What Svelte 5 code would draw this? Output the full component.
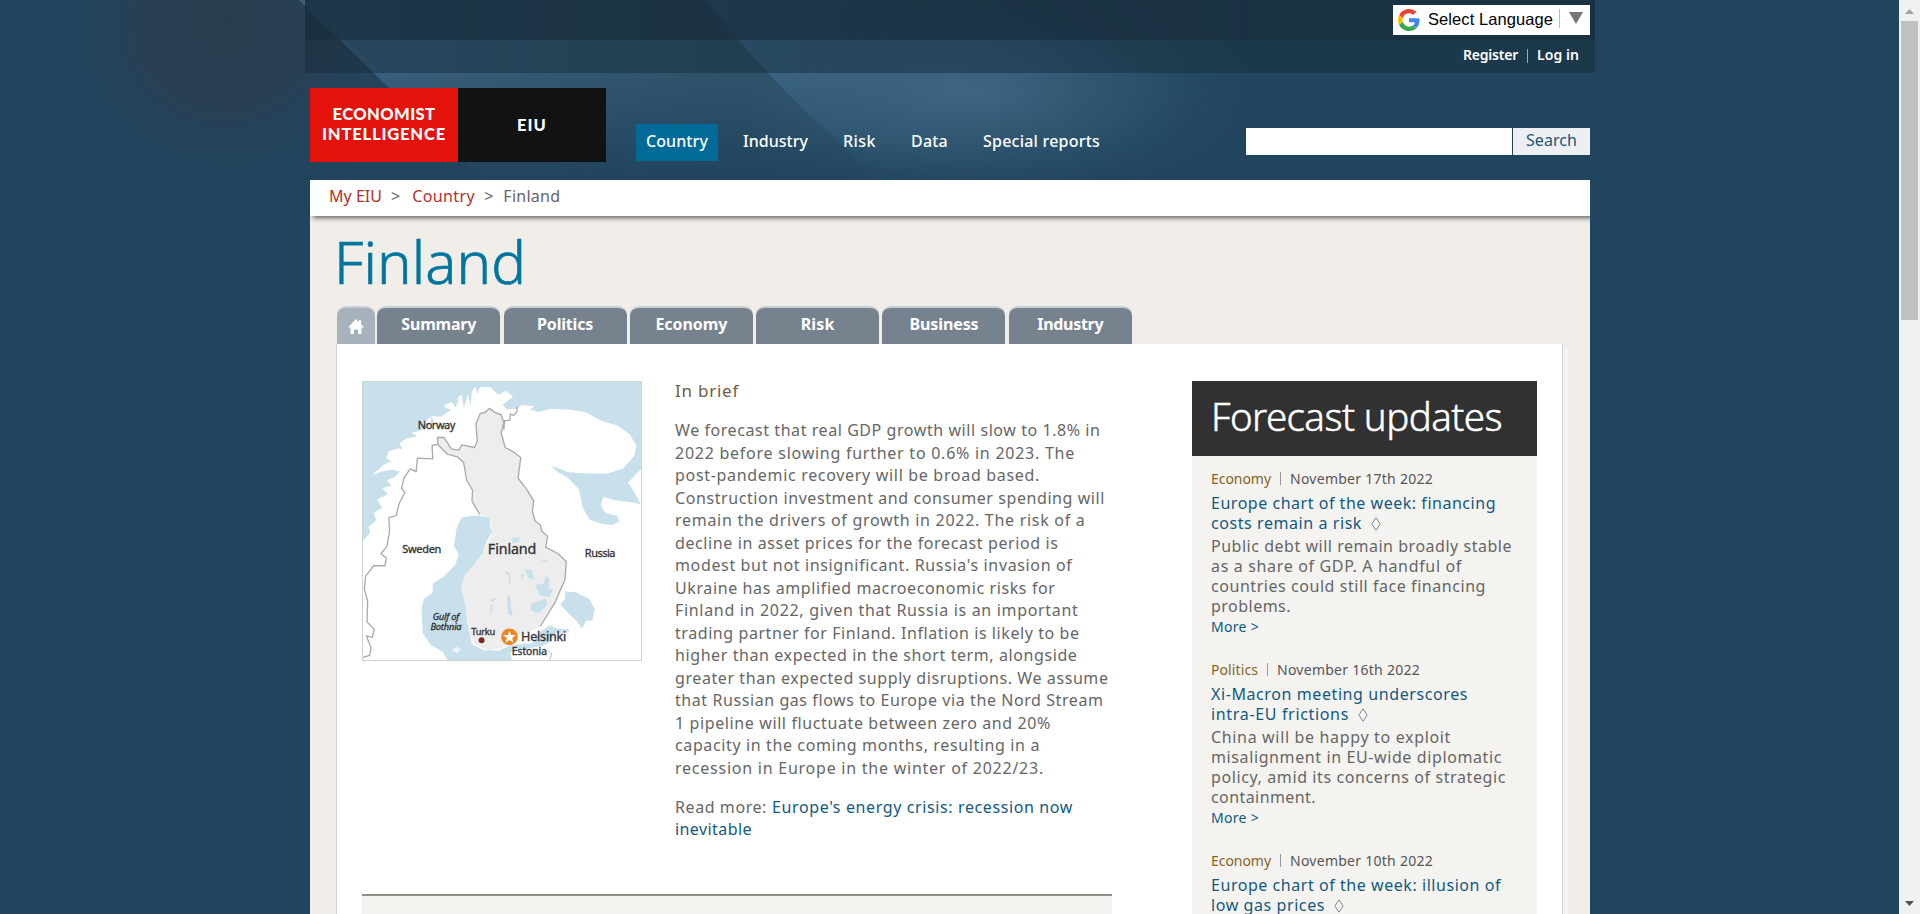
<script>
  // Tunes letter-spacing so that a run of text fills its measure in px.
  function fit(node, width) {
    const range = document.createRange();
    range.selectNodeContents(node);
    const natural = range.getBoundingClientRect().width;
    const n = node.textContent.length;
    if (n > 1) node.style.letterSpacing = (width - natural) / n + 'px';
  }

  const nav = [
    ['Country', 62, true],
    ['Industry', 65],
    ['Risk', 33],
    ['Data', 37],
    ['Special reports', 117]
  ];
  const tabs = [
    ['Summary', 75],
    ['Politics', 56],
    ['Economy', 72],
    ['Risk', 34],
    ['Business', 69],
    ['Industry', 66]
  ];
  const brief = [
    ['We forecast that real GDP growth will slow to 1.8% in', 425.5],
    ['2022 before slowing further to 0.6% in 2023. The', 400],
    ['post-pandemic recovery will be broad based.', 365],
    ['Construction investment and consumer spending will', 430],
    ['remain the drivers of growth in 2022. The risk of a', 410.5],
    ['decline in asset prices for the forecast period is', 383.5],
    ["modest but not insignificant. Russia's invasion of", 397.5],
    ['Ukraine has amplified macroeconomic risks for', 380.5],
    ['Finland in 2022, given that Russia is an important', 403.5],
    ['trading partner for Finland. Inflation is likely to be', 404.5],
    ['higher than expected in the short term, alongside', 402.5],
    ['greater than expected supply disruptions. We assume', 433.5],
    ['that Russian gas flows to Europe via the Nord Stream', 428.5],
    ['1 pipeline will fluctuate between zero and 20%', 376],
    ['capacity in the coming months, resulting in a', 365],
    ['recession in Europe in the winter of 2022/23.', 369]
  ];
  const updates = [
    {
      topic: ['Economy', 60],
      date: ['November 17th 2022', 143],
      title: [['Europe chart of the week: financing', 285], ['costs remain a risk', 151]],
      text: [
        ['Public debt will remain broadly stable', 301],
        ['as a share of GDP. A handful of', 251],
        ['countries could still face financing', 275],
        ['problems.', 80]
      ]
    },
    {
      topic: ['Politics', 47],
      date: ['November 16th 2022', 143],
      title: [['Xi-Macron meeting underscores', 257], ['intra-EU frictions', 138]],
      text: [
        ['China will be happy to exploit', 240],
        ['misalignment in EU-wide diplomatic', 291],
        ['policy, amid its concerns of strategic', 295],
        ['containment.', 105]
      ]
    },
    {
      topic: ['Economy', 60],
      date: ['November 10th 2022', 143],
      title: [['Europe chart of the week: illusion of', 290], ['low gas prices', 114]],
      text: []
    }
  ];
</script>

<div class="page">
  <svg class="backdrop" width="1899" height="230" viewBox="0 0 1899 230" aria-hidden="true">
    <defs>
      <radialGradient id="smoke"><stop offset="0" stop-color="#2a3d4f" /><stop offset=".4" stop-color="#293f53" stop-opacity=".9" /><stop offset="1" stop-color="#21455e" stop-opacity="0" /></radialGradient>
      <radialGradient id="glow"><stop offset="0" stop-color="#456c8a" stop-opacity=".9" /><stop offset=".5" stop-color="#38607f" stop-opacity=".5" /><stop offset="1" stop-color="#21455e" stop-opacity="0" /></radialGradient>
      <linearGradient id="beamA" x1="0" x2="1"><stop offset="0" stop-color="#3c6384" stop-opacity=".95" /><stop offset=".3" stop-color="#355b75" stop-opacity=".85" /><stop offset=".6" stop-color="#315369" stop-opacity=".8" /><stop offset="1" stop-color="#2d5068" stop-opacity="0" /></linearGradient>
      <linearGradient id="beamB" x1="0" x2="1"><stop offset="0" stop-color="#406e92" stop-opacity=".85" /><stop offset=".45" stop-color="#3c6581" stop-opacity=".6" /><stop offset="1" stop-color="#2d5068" stop-opacity="0" /></linearGradient>
      <linearGradient id="fade" x1="0" y1="0" x2="0" y2="1"><stop offset=".34" stop-color="#fff" /><stop offset=".78" stop-color="#000" /></linearGradient>
      <mask id="down"><rect width="1899" height="230" fill="url(#fade)" /></mask>
    </defs>
    <ellipse cx="225" cy="20" rx="210" ry="210" fill="url(#smoke)" />
    <g mask="url(#down)">
      <rect x="305" width="195" height="230" fill="#2c4258" opacity=".35" />
      <path d="M299 0L534 230H1100V0Z" fill="url(#beamA)" />
      <path d="M707 0Q765 78 855 157L925 230H1250V0Z" fill="url(#beamB)" />
    </g>
    <ellipse cx="975" cy="95" rx="310" ry="120" fill="url(#glow)" opacity=".75" />
  </svg>

  <div class="topbar">
    <div class="langrow">
      <div class="lang">
        <svg width="22" height="22" viewBox="0 0 48 48">
          <path fill="#EA4335" d="M24 9.5c3.5 0 6.700 1.200 9.200 3.600l6.900-6.900C35.900 2.400 30.500 0 24 0 14.600 0 6.500 5.400 2.600 13.200l8 6.200C12.400 13.700 17.700 9.500 24 9.500z" />
          <path fill="#4285F4" d="M47 24.600c0-1.600-.2-3.100-.4-4.600H24v9h12.900c-.6 3-2.200 5.500-4.700 7.200l7.700 6C44.400 38 47 31.800 47 24.600z" />
          <path fill="#FBBC05" d="M10.500 28.600c-.5-1.500-.8-3-.8-4.600s.3-3.100.8-4.600l-8-6.200C.9 16.500 0 20.100 0 24s.9 7.500 2.600 10.800z" />
          <path fill="#34A853" d="M24 48c6.500 0 11.900-2.100 15.900-5.800l-7.700-6c-2.200 1.500-4.900 2.300-8.200 2.300-6.300 0-11.600-4.200-13.500-9.900l-8 6.200C6.500 42.600 14.600 48 24 48z" />
        </svg>
        <span class="lt"><span use:fit={125}>Select Language</span></span>
        <i></i>
        <svg class="tri" width="14" height="12" viewBox="0 0 14 12"><path d="M0 0h14L7 12z" fill="#767676" /></svg>
      </div>
    </div>
    <div class="account">
      <a use:fit={55}>Register</a><b></b><a use:fit={42}>Log in</a>
    </div>
  </div>

  <div class="wrap">
    <header>
      <div class="logo">
        <div class="red"><span use:fit={103}>ECONOMIST</span><span use:fit={124}>INTELLIGENCE</span></div>
        <div class="black"><span use:fit={30}>EIU</span></div>
      </div>
      <nav>
        {#each nav as [label, w, on]}
          <a class:on><span use:fit={w}>{label}</span></a>
        {/each}
      </nav>
      <div class="search"><div class="field"></div><button><span use:fit={51}>Search</span></button></div>
    </header>

    <div class="crumbs">
      <a use:fit={53}>My EIU</a><em class="g1">&gt;</em><a use:fit={63}>Country</a><em class="g2">&gt;</em><span use:fit={57}>Finland</span>
    </div>

    <main>
      <h1><span use:fit={192}>Finland</span></h1>
      <div class="tabs">
        <div class="tab home">
          <svg width="16" height="15" viewBox="0 0 16 15"><path d="M8 0l3 3V1h2v4l3 3.500h-2.500V15H10v-4.500H6V15H2.500V8.500H0z" fill="#fff" /></svg>
        </div>
        {#each tabs as [label, w]}
          <div class="tab"><span use:fit={w}>{label}</span></div>
        {/each}
      </div>

      <div class="panel">
        <div class="left">
          <div class="intro">
            <div class="map">
              <svg viewBox="22 24 837 832" width="278" height="278" preserveAspectRatio="none">
                <rect x="22" y="24" width="837" height="832" fill="#fff" />
                <path fill="#c7e0ec" d="M22 24H859V285L820 325L838 352L858 390L830 384L780 378L745 368L738 394L752 416L788 424L794 442L770 452L735 447L705 436L684 402L672 345L640 312L604 290L588 274L640 294L700 298L760 298L806 282L838 246L845 215L826 182L790 155L740 140L690 114L640 106L590 104L550 114L525 106L538 97L500 92L486 104L455 106L442 92L474 68L452 50L430 62L404 38L374 40L366 60L350 50L346 96L338 60L326 102L318 62L300 100L290 84L264 98L288 108L256 128L228 126L236 142L200 168L168 176L186 186L152 194L134 206L140 226L128 222L98 232L92 252L108 262L86 270L48 304L78 292L110 286L132 292L118 308L94 318L108 334L80 342L98 360L64 376L80 400L54 416L62 438L38 458L44 474L22 500Z" />
                <path fill="#fff" d="M268 92l22-8-6 12zM304 76l12-14 6 14zM352 44l9-6 4 16-8 34zM130 212l26-20 8 10-22 16zM95 250l10-22 14 10-8 20zM198 150l30-22-2 18z" />
                <path fill="#c7e0ec" d="M318 430L350 424L375 424L404 430L404 456L412 470L394 502L384 534L356 572L330 600L318 640L330 690L335 735L344 780L350 808L380 824L430 828L466 812L494 808L530 806L556 772L584 752L606 762L645 765L638 774L600 776L590 800L560 815L500 824L466 832L470 856H276L262 832L226 810L202 776L198 700L206 672L232 655L232 628L270 602L300 570L310 540L296 514L304 462Z" />
                <path fill="#c7e0ec" d="M632 650L664 654L702 672L720 704L712 738L694 738L682 762L664 738L644 720L616 690L630 674Z" />
                <path fill="#ededed" d="M403 103L420 114L438 122L446 145L438 176L450 220L476 234L497 250L489 312L514 344L536 380L532 410L540 440L556 452L560 470L578 486L572 518L610 538L634 562L630 616L600 684L556 755L520 774L478 790L436 822L395 827L360 808L346 786L335 735L330 690L318 640L330 600L356 572L390 525L412 470L404 430L373 420L350 380L352 348L334 318L325 265L306 248L276 240L248 212L246 190L266 190L288 224L310 228L320 212L358 220L366 200L362 150L375 118Z" />
                <path fill="none" stroke="#aaa" stroke-width="4" stroke-linejoin="round" d="M373 420L350 380L352 348L334 318L325 265L306 248L276 240L248 212L246 190L266 190L288 224L310 228L320 212L358 220L366 200L362 150L375 118L388 116L403 103L420 116L438 122L446 145L438 176L450 220L476 234L497 250L489 312L514 344L536 380L532 410L540 440L556 452L560 470L578 486L572 518L610 538L634 562L630 616L600 684L556 755M446 168L448 140L464 138L466 120L476 124L486 112L486 98" />
                <path fill="none" stroke="#aaa" stroke-width="4" stroke-linejoin="round" d="M248 210L230 214L232 254L186 252L182 292L164 284L146 310L138 342L148 354L130 390L122 424L100 430L102 470L94 516L76 538L92 550L88 574L54 574L30 605L26 644L36 680L34 742L56 764L50 788L32 784L46 818L42 842L22 848" />
                <path fill="none" stroke="#aaa" stroke-width="2.500" d="M580 828L590 838L584 856" />
                <path fill="#c7e0ec" d="M470 492l24-4-2 14-20 4zM508 584l22 2 8 30-18-6zM540 632l26-6 6-22 12 8-4 30 14 2-10 24-28-6zM528 690l24-12 22-6 2 20-24 24-24-8zM456 664l8 0 8 60-14-6zM448 592h10l8 10-2 26h-4l2-24zM404 676l22-6-14 12zM406 690l6 0-2 30-4-2zM498 600l8-4-4 26zM548 552l30 8-2 6z" />
                <path fill="#fff" d="M380 828l14-8 6 8zM290 826l14-10 12 8-10 12z" opacity=".7" />
                <circle cx="379" cy="797" r="9" fill="#7c2c24" />
                <circle cx="463" cy="787" r="25" fill="#ee8422" />
                <path fill="#fff" d="M463 768l5 13h14l-11 9 4 14-12-8-12 8 4-14-11-9h14z" />
                <g font-family="Noto Sans, sans-serif" fill="#333" stroke="#333" stroke-width="1">
                  <text x="187" y="164" font-size="33" textLength="113">Norway</text>
                  <text x="140" y="536" font-size="33" textLength="118">Sweden</text>
                  <text x="398" y="540" font-size="43" textLength="146">Finland</text>
                  <text x="690" y="547" font-size="33" textLength="92">Russia</text>
                  <text x="232" y="737" font-size="28" textLength="80" font-style="italic">Gulf of</text>
                  <text x="225" y="767" font-size="28" textLength="94" font-style="italic">Bothnia</text>
                  <text x="348" y="780" font-size="28" textLength="72">Turku</text>
                  <text x="498" y="800" font-size="38" textLength="136">Helsinki</text>
                  <text x="470" y="841" font-size="31" textLength="106">Estonia</text>
                </g>
              </svg>
            </div>
            <div class="brief">
              <h2><span use:fit={64}>In brief</span></h2>
              <p>
                {#each brief as [line, w]}<span class="line"><span use:fit={w}>{line}</span></span>{/each}
              </p>
              <p>
                <span class="line"><span class="rm" use:fit={92}>Read more:</span><a use:fit={301}>Europe's energy crisis: recession now</a></span>
                <span class="line"><a use:fit={77}>inevitable</a></span>
              </p>
            </div>
          </div>
          <div class="next"></div>
        </div>

        <aside>
          <h3><span use:fit={291}>Forecast updates</span></h3>
          {#each updates as u}
            <article>
              <div class="meta"><span class="topic" use:fit={u.topic[1]}>{u.topic[0]}</span><i></i><span use:fit={u.date[1]}>{u.date[0]}</span></div>
              <div class="title">
                {#each u.title as [line, w], k}
                  <span class="line"><a use:fit={w}>{line}</a>{#if k === 1}<svg width="10" height="14" viewBox="0 0 10 14"><path d="M5 .8L9.200 7L5 13.200L.8 7z" fill="none" stroke="#7d8b95" /></svg>{/if}</span>
                {/each}
              </div>
              {#if u.text.length}
                <div class="text">{#each u.text as [line, w]}<span class="line"><span use:fit={w}>{line}</span></span>{/each}</div>
                <a class="more" use:fit={48}>More &gt;</a>
              {/if}
            </article>
          {/each}
        </aside>
      </div>
    </main>
  </div>
</div>
<div class="scroll">
  <svg width="21" height="21" viewBox="0 0 21 21"><path d="M6 14h9l-4.500-5z" fill="#a3a3a3" /></svg>
  <div class="thumb"></div>
  <svg class="down" width="21" height="21" viewBox="0 0 21 21"><path d="M6 8h9l-4.500 5z" fill="#505050" /></svg>
</div>

<style>
  :global(body) { overflow: hidden; background: #21455e; }
  :global(#app) { display: flex; height: 914px; overflow: hidden; }
  .page, .scroll { box-sizing: border-box; }
  .page { width: 1899px; height: 914px; overflow: hidden; position: relative; background: #21455e; font: 16px/22.5px "Noto Sans", "Open Sans", sans-serif; color: #666; white-space: nowrap; }
  .backdrop { position: absolute; left: 0; top: 0; }
  .topbar { position: relative; width: 1290px; height: 73px; margin-left: 305px; }
  .langrow { height: 40px; box-sizing: border-box; padding: 5px 5px 0 0; display: flex; justify-content: flex-end; background: rgba(22, 44, 60, .8); }
  .lang { display: flex; align-items: center; width: 197px; height: 30px; box-sizing: border-box; padding-left: 5px; background: #fff; }
  .lt { width: 131px; margin-left: 8px; font: 16.5px/28px "Liberation Sans", Arial, sans-serif; color: #000; padding-bottom: 2px; }
  .lang i { width: 1px; height: 19px; background: #bbb; margin-bottom: 3px; }
  .tri { margin: 0 0 4px 9px; }
  .account { display: flex; align-items: center; justify-content: flex-end; height: 33px; box-sizing: border-box; padding: 0 16px 3px 0; background: rgba(22, 42, 56, .45); font-size: 14px; font-weight: 600; color: #fff; }
  .account b { width: 1px; height: 14px; margin: 1px 9px 0; background: #98a7b2; }
  .wrap { position: relative; width: 1280px; margin-left: 310px; }
  header { display: flex; height: 107px; }
  .logo { display: flex; margin-top: 15px; height: 74px; color: #fff; font: 900 16.5px/20px Lato, "Noto Sans", sans-serif; }
  .logo div { width: 148px; display: flex; flex-direction: column; align-items: center; justify-content: center; box-sizing: border-box; }
  .red { background: #e3120b; padding-bottom: 2px; }
  .black { background: #121212; }
  nav { display: flex; gap: 15px; margin: 51px 0 0 30px; height: 37px; color: #fff; font-weight: 500; }
  nav a { padding: 0 10px; line-height: 35px; }
  nav a.on { background: #006a99; }
  .search { display: flex; margin: 55px 0 0 auto; height: 27px; gap: 1px; }
  .field { width: 266px; background: #fff; }
  button { width: 77px; border: 0; padding: 0 0 2px; background: #eceff3; color: #1f5377; font: 16px/25px "Noto Sans", sans-serif; }
  .crumbs { position: relative; display: flex; height: 36px; box-sizing: border-box; padding-left: 19px; background: #fff; line-height: 32px; box-shadow: 3px 2px 5px rgba(0, 0, 0, .6); clip-path: inset(0 0 -9px 0); }
  .crumbs a { color: #b52f2b; }
  .crumbs em { font-style: normal; }
  .g1 { margin: 0 12px 0 9px; }
  .g2 { margin: 0 10px 0 9px; }
  main { height: 698px; background: #f1eeea; padding: 0 27px; }
  h1 { margin: 0; padding: 10px 0 0; height: 90px; box-sizing: border-box; font: 300 58px/72px "Noto Sans", sans-serif; color: #00769f; text-indent: -3px; -webkit-text-stroke: .7px #00769f; }
  .tabs { display: flex; gap: 3.300px; }
  .tab { display: flex; justify-content: center; width: 123px; height: 38px; box-sizing: border-box; border-top: 2px solid #c9ced2; border-radius: 9px 9px 0 0; background: #77828f; color: #fff; font-weight: 700; line-height: 32px; }
  .tab.home { width: 38px; margin-right: -1px; background: #a8b2bc; align-items: center; }
  .panel { display: flex; justify-content: space-between; width: 1227px; height: 570px; margin-left: -1px; box-sizing: border-box; padding: 37px 25px 0 25px; background: #fff; border: solid #cfd1d2; border-width: 0 1px; box-shadow: 5px 5px 0 #f4f4f3; }
  .left { width: 750px; }
  .intro { display: flex; gap: 33px; height: 513px; }
  .map { flex: none; width: 278px; height: 278px; border: 1px solid #ccd3d7; }
  .map svg { display: block; }
  h2 { margin: -2px 0 16px; font-size: 17px; font-weight: 400; line-height: 24px; color: #705c3e; }
  p { margin: 0 0 16.500px; }
  .line { display: block; }
  .brief a, .title a, .more { color: #125a82; }
  .rm { margin-right: 5px; }
  .next { height: 60px; background: #f2f3ef; border-top: 2px solid #8f8f84; }
  aside { width: 345px; background: #f4f3f0; }
  h3 { margin: 0; height: 75px; box-sizing: border-box; padding-left: 19px; background: #313131; color: #fff; font: 300 38.500px/70px "Noto Sans", sans-serif; -webkit-text-stroke: .5px #fff; }
  article { height: 191px; padding-left: 19px; box-sizing: border-box; padding-top: 12px; line-height: 20px; }
  .meta { display: flex; align-items: center; font-size: 14px; line-height: 21px; color: #555; }
  .meta .topic { color: #87641f; }
  .meta i { width: 1px; height: 13px; margin: 0 9px; background: #999; }
  .title { padding-top: 4px; }
  .title svg { margin-left: 9px; vertical-align: -2px; }
  .text { padding-top: 3px; }
  .more { display: inline-block; font-size: 14px; line-height: 20px; }
  .scroll { display: flex; flex-direction: column; width: 21px; height: 914px; background: #f1f1f1; }
  .thumb { width: 17px; height: 299px; margin-left: 2px; background: #c1c1c1; }
  .down { margin-top: auto; }
</style>
